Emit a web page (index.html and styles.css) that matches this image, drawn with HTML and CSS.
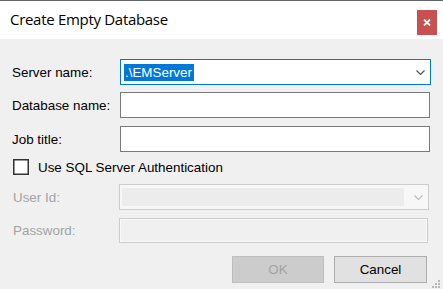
FILE: index.html
```html
<!DOCTYPE html>
<html>
<head>
<meta charset="utf-8">
<link rel="stylesheet" href="styles.css">
</head>
<body>
<div class="window">
  <div class="titlebar">
    <div class="title">Create Empty Database</div>
    <div class="close">
      <svg width="8" height="7" viewBox="0 0 8 7"><path d="M1 0.5 L7 6.5 M7 0.5 L1 6.5" stroke="#fff" stroke-width="1.8" fill="none"/></svg>
    </div>
  </div>
  <div class="content">
    <div class="row r1">
      <div class="label">Server name:</div>
      <div class="combo active">
        <span class="sel">.\EMServer</span>
        <svg class="chev" width="9" height="5" viewBox="0 0 9 5"><path d="M0.5 0.5 L4.5 4.5 L8.5 0.5" stroke="#555" stroke-width="1.2" fill="none"/></svg>
      </div>
    </div>
    <div class="row r2">
      <div class="label">Database name:</div>
      <div class="textbox"></div>
    </div>
    <div class="row r3">
      <div class="label">Job title:</div>
      <div class="textbox"></div>
    </div>
    <div class="row r4">
      <div class="checkbox"></div>
      <div class="cblabel">Use SQL Server Authentication</div>
    </div>
    <div class="row r5">
      <div class="label disabled">User Id:</div>
      <div class="combo dis">
        <div class="inner"></div>
        <svg class="chev" width="9" height="5" viewBox="0 0 9 5"><path d="M0.5 0.5 L4.5 4.5 L8.5 0.5" stroke="#bdbdbd" stroke-width="1.2" fill="none"/></svg>
      </div>
    </div>
    <div class="row r6">
      <div class="label disabled">Password:</div>
      <div class="textbox dis"></div>
    </div>
    <div class="buttons">
      <div class="btn ok">OK</div>
      <div class="btn cancel">Cancel</div>
      <svg class="grip" width="11" height="11" viewBox="0 0 11 11" fill="#b9b9b9">
        <rect x="8" y="2" width="2" height="2"/>
        <rect x="5" y="5" width="2" height="2"/>
        <rect x="8" y="5" width="2" height="2"/>
        <rect x="2" y="8" width="2" height="2"/>
        <rect x="5" y="8" width="2" height="2"/>
        <rect x="8" y="8" width="2" height="2"/>
      </svg>
    </div>
  </div>
</div>
</body>
</html>
```

FILE: styles.css
```css
html, body {
  margin: 0;
  padding: 0;
}
body {
  width: 443px;
  height: 289px;
  overflow: hidden;
  background: #f0f0f0;
  font-family: "Liberation Sans", Arial, sans-serif;
  font-size: 13.4px;
  color: #000;
}
.window {
  width: 443px;
  height: 289px;
  display: flex;
  flex-direction: column;
  border-top: 1px solid #646464;
  box-sizing: border-box;
}
.titlebar {
  height: 38px;
  background: #fff;
  display: flex;
  align-items: flex-start;
  justify-content: space-between;
  flex: none;
}
.title {
  font-family: "Open Sans", "Noto Sans", sans-serif;
  font-size: 15px;
  padding-left: 10px;
  margin-top: 8px;
  line-height: 20px;
  letter-spacing: -0.3px;
}
.close {
  width: 20px;
  height: 25px;
  margin-top: 9px;
  margin-right: 6px;
  background: #c75050;
  display: flex;
  align-items: center;
  justify-content: center;
}
.content {
  flex: 1;
  display: flex;
  flex-direction: column;
  padding-top: 20px;
}
.row {
  display: flex;
  align-items: center;
}
.label {
  width: 108px;
  padding-left: 12px;
  flex: none;
}
.label.disabled {
  color: #a3a3a3;
  width: 106px;
  padding-left: 13px;
}
.r2 { margin-top: 7px; }
.r3 { margin-top: 8px; }
.r4 { margin-top: 7px; padding-left: 13px; }
.r5 { margin-top: 9px; }
.r6 { margin-top: 8px; }
.combo {
  box-sizing: border-box;
  height: 26px;
  display: flex;
  align-items: center;
  justify-content: space-between;
}
.combo.active {
  width: 311px;
  border: 1px solid #0078d7;
  background: #fff;
  padding-left: 3px;
  padding-right: 5px;
}
.sel {
  background: #0078d7;
  color: #fff;
  padding: 0 2px 0 1px;
  line-height: 17px;
}
.textbox {
  box-sizing: border-box;
  width: 310px;
  height: 26px;
  border: 1px solid #7a7a7a;
  background: #fff;
}
.textbox.dis {
  width: 309px;
  height: 25px;
  border-color: #cccccc;
  background: #f0f0f0;
  box-shadow: inset 0 0 0 1px #fafafa;
}
.combo.dis {
  width: 310px;
  border: 1px solid #cccccc;
  background: #f7f7f7;
  padding: 3px 5px 3px 2px;
}
.combo.dis .inner {
  width: 282px;
  height: 18px;
  background: #ececec;
}
.checkbox {
  box-sizing: border-box;
  width: 16px;
  height: 16px;
  border: 1px solid #333;
  box-shadow: inset 0 0 0 0.5px #333;
  background: #fff;
  flex: none;
}
.cblabel {
  margin-left: 9px;
}
.buttons {
  margin-top: 13px;
  display: flex;
  justify-content: flex-end;
  gap: 10px;
  padding-right: 2px;
}
.btn {
  box-sizing: border-box;
  height: 27px;
  display: flex;
  align-items: center;
  justify-content: center;
}
.ok {
  width: 92px;
  background: #cccccc;
  border: 1px solid #bfbfbf;
  color: #a3a3a3;
}
.cancel {
  width: 93px;
  background: #e1e1e1;
  border: 1px solid #adadad;
}
.grip {
  align-self: flex-end;
  margin-bottom: -6px;
  margin-left: -7px;
  flex: none;
}
```
